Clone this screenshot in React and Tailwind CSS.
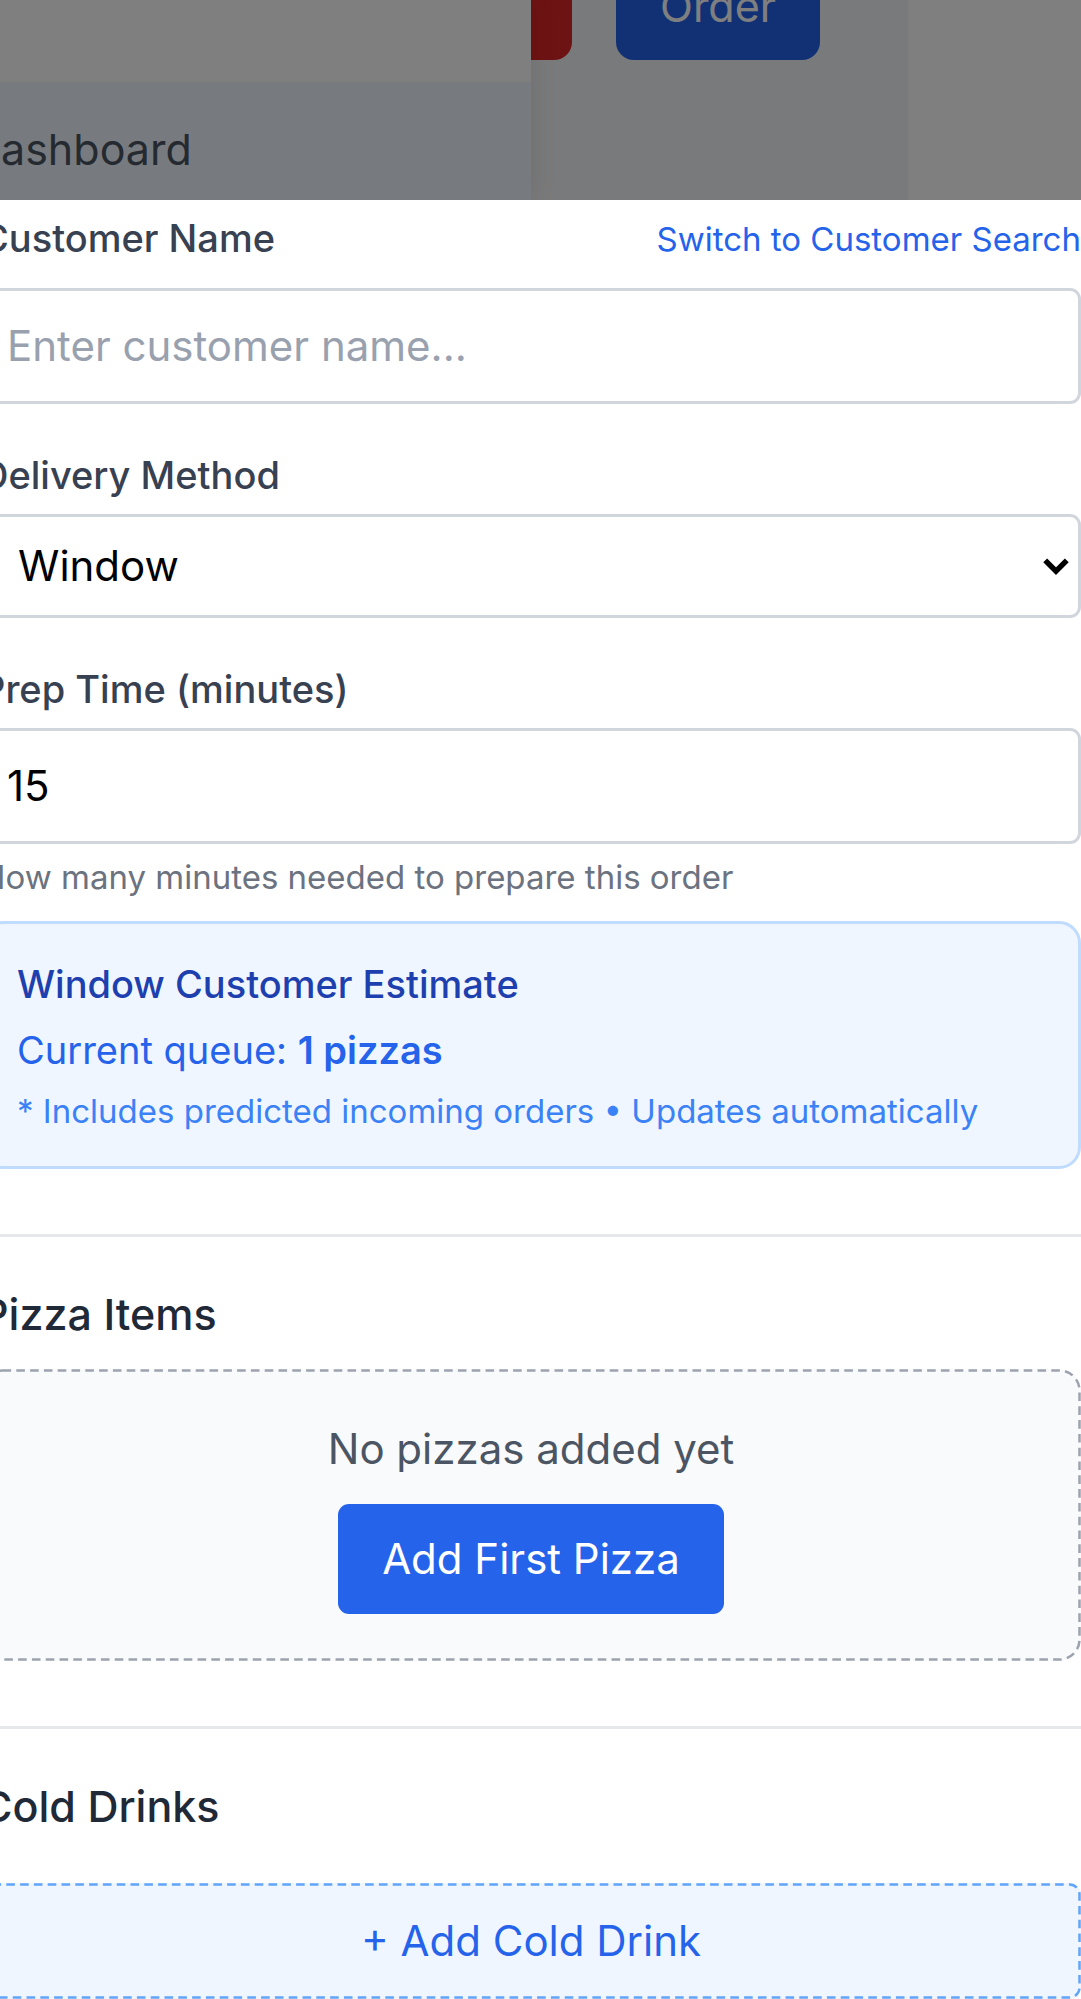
import { useState } from "react";

const fieldClass =
  "block w-full rounded-[11px] border-[3px] border-gray-300 bg-white px-[23px] text-[42px] leading-[66px] text-black outline-none placeholder:text-gray-400";
const labelClass = "text-[38px] font-medium leading-[55px] text-[#374151]";
const headingClass = "text-[43px] font-medium leading-[66px] text-[#1f2937]";

function DashedOutline({ color, radius }) {
  return (
    <svg className="pointer-events-none absolute inset-0 h-full w-full" fill="none" aria-hidden="true">
      <rect
        x="1.5"
        y="1.5"
        rx={radius}
        className="h-[calc(100%-3px)] w-[calc(100%-3px)]"
        stroke={color}
        strokeWidth="2.5"
        strokeDasharray="8.6 5.2"
      />
    </svg>
  );
}

function Backdrop() {
  return (
    <div className="relative flex h-[200px] overflow-hidden bg-white">
      <aside className="z-10 w-[531px] shrink-0 bg-white pt-[82px] shadow-[0_0_24px_rgba(0,0,0,0.1)]">
        <a
          href="#dashboard"
          className="-ml-[30px] block bg-[#eff6ff] py-[34px] text-[43px] leading-[66px] text-[#4b5563]"
        >
          Dashboard
        </a>
      </aside>
      <main className="flex w-[377px] shrink-0 items-start bg-[#f3f4f6]">
        <button
          type="button"
          aria-label="Close"
          className="mr-11 h-[60px] w-[41px] rounded-br-[18px] bg-[#dc2626]"
        />
        <button
          type="button"
          className="-mt-12 h-[108px] w-[204px] rounded-b-[18px] bg-[#2563eb] text-[43px] leading-[66px] text-white"
        >
          Order
        </button>
      </main>
      <div className="pointer-events-none absolute inset-0 z-20 bg-black/50" />
    </div>
  );
}

export default function App() {
  const [name, setName] = useState("");
  const [method, setMethod] = useState("Window");
  const [prep, setPrep] = useState("15");

  return (
    <div className="overflow-hidden bg-white font-[Inter,sans-serif]">
      <Backdrop />
      <form className="-ml-[19px] flex flex-col bg-white pt-[11px]">
        <div className="mb-[22px] flex items-center justify-between">
          <label htmlFor="name" className={labelClass}>
            Customer Name
          </label>
          <button type="button" className="text-[33px] leading-[44px] text-[#2563eb]">
            Switch to Customer Search
          </button>
        </div>
        <input
          id="name"
          type="text"
          value={name}
          onChange={(e) => setName(e.target.value)}
          placeholder="Enter customer name..."
          className={`${fieldClass} py-[22px]`}
        />

        <label htmlFor="method" className={`${labelClass} mt-11 mb-[11px]`}>
          Delivery Method
        </label>
        <div className="relative">
          <select
            id="method"
            value={method}
            onChange={(e) => setMethod(e.target.value)}
            className="block w-full appearance-none rounded-[11px] border-[3px] border-gray-300 bg-white py-4 pr-16 pl-[34px] text-[42px] leading-[66px] text-black outline-none"
          >
            <option>Window</option>
            <option>Phone</option>
            <option>Delivery</option>
          </select>
          <svg
            viewBox="0 0 26 18"
            className="pointer-events-none absolute top-[44px] right-3 h-[18px] w-[26px]"
            fill="none"
            stroke="#000"
            strokeWidth="5.5"
            aria-hidden="true"
          >
            <path d="M2.2 2.4 13 13.2 23.8 2.4" />
          </svg>
        </div>

        <label htmlFor="prep" className={`${labelClass} mt-11 mb-[11px]`}>
          Prep Time (minutes)
        </label>
        <input
          id="prep"
          type="text"
          inputMode="numeric"
          value={prep}
          onChange={(e) => setPrep(e.target.value)}
          className={`${fieldClass} py-[22px]`}
        />
        <p className="mt-[11px] text-[33px] leading-[44px] text-[#6b7280]">
          How many minutes needed to prepare this order
        </p>

        <section className="mt-[22px] rounded-[22px] border-[3px] border-[#bfdbfe] bg-[#eff6ff] px-[33px] py-[33px]">
          <h3 className="text-[38px] font-medium leading-[55px] text-[#1e40af]">
            Window Customer Estimate
          </h3>
          <p className="mt-[11px] text-[38px] leading-[55px] text-[#2563eb]">
            Current queue: <strong className="font-semibold">1 pizzas</strong>
          </p>
          <p className="mt-[11px] text-[33px] leading-[44px] text-[#3b82f6]">
            * Includes predicted incoming orders • Updates automatically
          </p>
        </section>

        <section className="mt-[65px] border-t-[3px] border-gray-200 pt-11">
          <h2 className={`${headingClass} mb-[22px]`}>Pizza Items</h2>
          <div className="relative flex flex-col items-center gap-[22px] rounded-[22px] bg-[#f9fafb] py-[47px]">
            <DashedOutline color="#9ca3af" radius="20" />
            <p className="text-[42px] leading-[66px] text-[#4b5563]">No pizzas added yet</p>
            <button
              type="button"
              className="rounded-[11px] bg-[#2563eb] px-11 py-[22px] text-[42px] leading-[66px] text-white"
            >
              Add First Pizza
            </button>
          </div>
        </section>

        <section className="mt-[65px] border-t-[3px] border-gray-200 pt-11">
          <h2 className={`${headingClass} mb-11`}>Cold Drinks</h2>
          <button
            type="button"
            className="relative block w-full rounded-[11px] bg-[#eff6ff] py-[25px] text-[42px] leading-[66px] text-[#2563eb]"
          >
            <DashedOutline color="#60a5fa" radius="10" />
            + Add Cold Drink
          </button>
        </section>
      </form>
    </div>
  );
}
